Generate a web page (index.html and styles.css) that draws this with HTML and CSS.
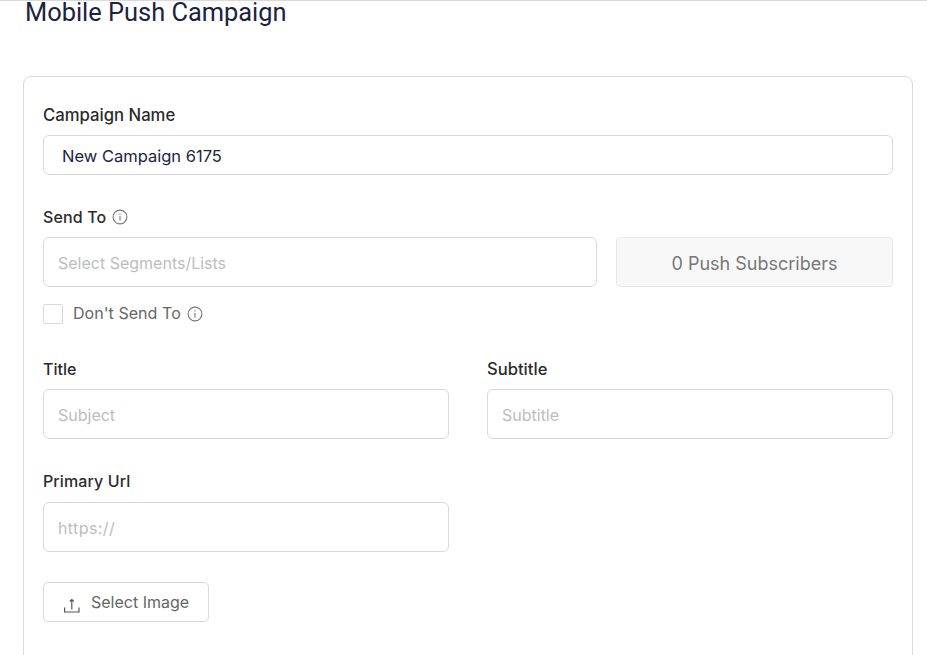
FILE: index.html
```html
<!DOCTYPE html>
<html lang="en">
<head>
<meta charset="utf-8">
<title>Mobile Push Campaign</title>
<link rel="stylesheet" href="styles.css">
</head>
<body>
<main class="page">
  <h1 class="title">Mobile Push Campaign</h1>
  <section class="card">
    <div class="field name-field">
      <label class="label label-name">Campaign Name</label>
      <div class="input name-input">New Campaign 6175</div>
    </div>
    <div class="field send-field">
      <label class="label label-send">Send To
        <svg class="info" viewBox="0 0 16 16"><circle cx="8" cy="8" r="6.9"/><path d="M8 7v4.6M8 4.2v1.3"/></svg>
      </label>
      <div class="send-row">
        <div class="input tall placeholder">Select Segments/Lists</div>
        <div class="subscribers">0 Push Subscribers</div>
      </div>
    </div>
    <div class="check-row">
      <span class="checkbox"></span>
      <span class="check-label">Don't Send To</span>
      <svg class="info" viewBox="0 0 16 16"><circle cx="8" cy="8" r="6.9"/><path d="M8 7v4.6M8 4.2v1.3"/></svg>
    </div>
    <div class="two-col">
      <div class="field">
        <label class="label">Title</label>
        <div class="input tall placeholder">Subject</div>
      </div>
      <div class="field">
        <label class="label label-sub">Subtitle</label>
        <div class="input tall placeholder">Subtitle</div>
      </div>
    </div>
    <div class="two-col url-row">
      <div class="field">
        <label class="label label-url">Primary Url</label>
        <div class="input tall placeholder url-input">https://</div>
      </div>
    </div>
    <button class="upload" type="button">
      <svg class="upload-icon" viewBox="0 0 16 16"><path d="M.6 10.5V15H15V10.5M7.8 12.5V2.5M5.8 4.5L7.8 2.5L9.8 4.5"/></svg>
      <span>Select Image</span>
    </button>
  </section>
</main>
</body>
</html>
```
FILE: styles.css
```css
* { box-sizing: border-box; }
html, body { height: 100%; }
body {
  margin: 0;
  background: #fff;
  overflow: hidden;
  border-top: 1px solid #d9d9d9;
  font-family: "Inter", "Liberation Sans", sans-serif;
}
.page { padding: 0 14px 0 23px; }
.title {
  margin: 0 0 0 2px;
  height: 75px;
  font-family: "Roboto", sans-serif;
  font-size: 25.4px;
  font-weight: 400;
  line-height: 23px;
  color: #1c2340;
}
.card {
  height: 700px;
  border: 1px solid #d9d9d9;
  border-radius: 8px;
  padding: 27px 19px 0;
}
.field { display: flex; flex-direction: column; min-width: 0; }
.label {
  display: flex;
  align-items: center;
  gap: 6px;
  height: 22px;
  margin-bottom: 9px;
  font-size: 16px;
  font-weight: 500;
  color: #2b2b2b;
}
.label-name { font-size: 16.7px; }
.label-send { letter-spacing: .15px; }
.label-sub { font-size: 16.6px; }
.label-url { letter-spacing: .1px; margin-top: -1px; margin-bottom: 10px; }
.input {
  display: flex;
  align-items: center;
  height: 50px;
  border: 1px solid #d9d9d9;
  border-radius: 6px;
  padding: 1px 14px 0;
  font-size: 16px;
  color: #333;
}
.name-input { height: 40px; padding-left: 18px; color: #1c2340; font-size: 16.5px; }
.placeholder { color: #bdbdbd; }
.url-input { letter-spacing: .4px; }
.send-field { margin-top: 31px; }
.send-row { display: flex; gap: 19px; }
.send-row .input { flex: 0 0 554px; }
.subscribers {
  flex: 1;
  display: flex;
  align-items: center;
  justify-content: center;
  height: 50px;
  padding-top: 2px;
  background: #f8f8f8;
  border: 1px solid #e8e8e8;
  border-radius: 4px;
  font-size: 18px;
  color: #777;
}
.info {
  width: 16px;
  height: 16px;
  fill: none;
  stroke: #777;
  stroke-width: 1.1;
}
.check-row {
  display: flex;
  align-items: center;
  height: 20px;
  margin-top: 17px;
}
.checkbox {
  width: 20px;
  height: 20px;
  border: 1px solid #d9d9d9;
  border-radius: 2px;
  margin-right: 10px;
}
.check-label { padding-bottom: 2px; font-size: 16px; color: #666; margin-right: 6px; letter-spacing: .05px; }
.two-col {
  display: grid;
  grid-template-columns: 406px 406px;
  column-gap: 38px;
  margin-top: 34px;
}
.url-row { margin-top: 32px; }
.upload {
  display: flex;
  align-items: center;
  gap: 11px;
  width: 166px;
  height: 40px;
  margin-top: 30px;
  padding: 0 0 0 20px;
  background: #fff;
  border: 1px solid #d9d9d9;
  border-radius: 5px;
  font-family: inherit;
  font-size: 16px;
  color: #666;
}
.upload-icon {
  width: 16px;
  height: 16px;
  margin-top: 6px;
  fill: none;
  stroke: #555;
  stroke-width: 1.2;
}
```
